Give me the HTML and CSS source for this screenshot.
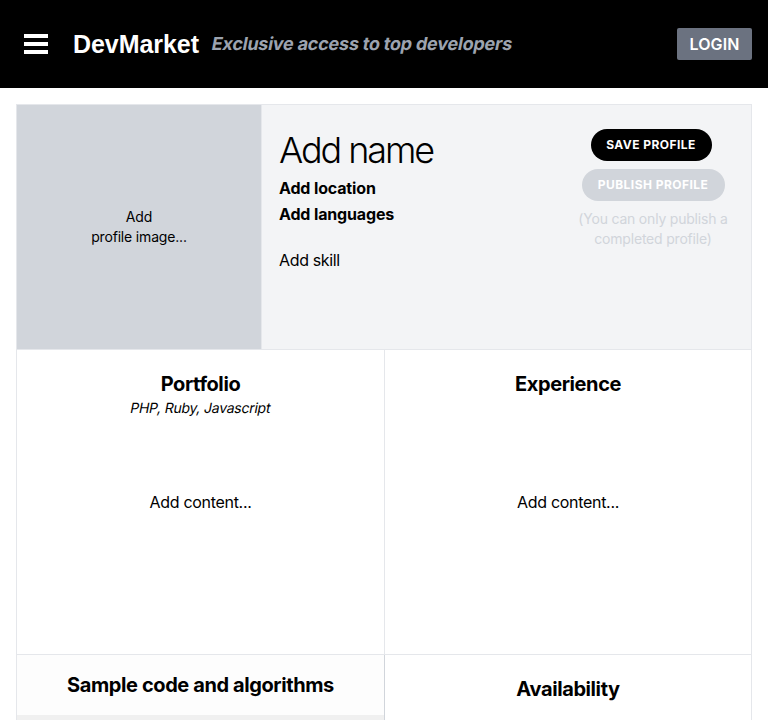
FILE: index.html
```html
<!DOCTYPE html>
<html lang="en">
<head>
<meta charset="utf-8">
<title>DevMarket</title>
<link rel="stylesheet" href="styles.css">
</head>
<body>
<header class="topbar">
  <svg class="menu" viewBox="0 0 24 20" width="24" height="20" fill="#fff"><path d="M0 0h24v4H0zM0 8h24v4H0zM0 16h24v4H0z"/></svg>
  <span class="logo">DevMarket</span>
  <span class="tagline">Exclusive access to top developers</span>
  <button class="login">LOGIN</button>
</header>
<main class="profile">
  <section class="intro">
    <div class="photo">Add<br>profile image...</div>
    <div class="details">
      <h1 class="name">Add name</h1>
      <p class="fact">Add location</p>
      <p class="fact">Add languages</p>
      <p class="skill">Add skill</p>
    </div>
    <div class="actions">
      <button class="pill save">SAVE PROFILE</button>
      <button class="pill publish">PUBLISH PROFILE</button>
      <p class="hint">(You can only publish a<br>completed profile)</p>
    </div>
  </section>
  <div class="grid">
    <section class="cell">
      <h2 class="title">Portfolio</h2>
      <p class="stack">PHP, Ruby, Javascript</p>
      <p class="content">Add content...</p>
    </section>
    <section class="cell">
      <h2 class="title">Experience</h2>
      <p class="content">Add content...</p>
    </section>
    <section class="cell samples">
      <h2 class="title">Sample code and algorithms</h2>
      <div class="code"></div>
    </section>
    <section class="cell">
      <h2 class="title">Availability</h2>
    </section>
  </div>
</main>
</body>
</html>
```
FILE: styles.css
```css
* { box-sizing: border-box; margin: 0; padding: 0; }
body { background: #fff; color: #000; font: 16px/24px Inter, sans-serif; }
button { border: 0; font-family: inherit; }
.topbar { display: flex; align-items: center; height: 88px; padding: 0 16px 0 24px; background: #000; color: #fff; }
.menu { margin-right: 24px; }
.logo { width: 140px; padding-left: 1px; font: bold 25px/28px "Liberation Sans", sans-serif; letter-spacing: -.05px; }
.tagline { color: #9ca3af; font-size: 18px; line-height: 28px; font-weight: 700; letter-spacing: -.23px; transform: skewX(-11deg); }
.login { margin-left: auto; width: 75px; height: 32px; border-radius: 2px; background: #6b7280; color: #fff; font-size: 16px; font-weight: 600; letter-spacing: .1px; }
.profile { margin: 16px 16px 0; border: 1px solid #e5e7eb; border-bottom: 0; }
.intro { display: flex; height: 245px; background: #f3f4f6; border-bottom: 1px solid #e5e7eb; }
.photo { display: flex; align-items: center; justify-content: center; width: 245px; border-right: 1px solid #e5e7eb; background: #d1d5db; font-size: 14px; line-height: 20px; letter-spacing: -.17px; text-align: center; }
.details { flex: 1; padding: 25px 17px; }
.name { font-size: 36px; line-height: 40px; font-weight: 300; letter-spacing: -2.1px; margin-bottom: 5px; }
.fact { font-weight: 700; line-height: 26px; letter-spacing: -.15px; }
.skill { margin-top: 21px; letter-spacing: -.35px; }
.actions { display: flex; flex-direction: column; align-items: center; gap: 8px; width: 195px; padding: 24px 1px 0 0; }
.pill { height: 32px; padding-bottom: 1px; border-radius: 16px; color: #fff; font-size: 12px; font-weight: 700; letter-spacing: .45px; }
.save { width: 121px; margin-right: 4px; background: #000; }
.publish { width: 143px; background: #d1d5db; }
.hint { color: #d1d5db; font-size: 14px; line-height: 20px; letter-spacing: -.2px; text-align: center; }
.grid { display: grid; grid-template-columns: 368px 366px; grid-template-rows: 305px 65px; }
.cell { text-align: center; padding-top: 20px; }
.cell:nth-child(-n+2) { border-bottom: 1px solid #e5e7eb; }
.cell:nth-child(odd) { border-right: 1px solid #e5e7eb; }
.title { font-size: 20px; line-height: 28px; font-weight: 700; letter-spacing: -.4px; }
.stack { height: 20px; font-size: 14px; line-height: 20px; letter-spacing: -.25px; transform: skewX(-11deg); }
.content { margin-top: 92px; letter-spacing: -.3px; }
.stack + .content { margin-top: 72px; }
.cell.samples { padding-top: 16px; border-right-color: #d1d5db; background: #fdfdfd; }
.code { height: 5px; margin-top: 16px; background: #f0f0f0; }
```
